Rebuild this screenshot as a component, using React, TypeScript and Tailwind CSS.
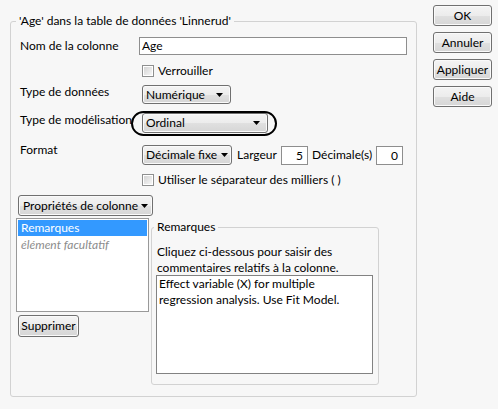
import React from "react";

function Caret() {
  return (
    <svg width="7" height="4" viewBox="0 0 7 4" className="shrink-0">
      <path d="M0 0H7L3.5 4Z" fill="#000" />
    </svg>
  );
}

function Check() {
  return (
    <div className="w-[12px] h-[12px] border border-[#8e8f8f] bg-white p-[1px] shrink-0">
      <div className="w-full h-full bg-linear-to-br from-[#d4d4d4] to-[#f6f6f6]" />
    </div>
  );
}

const btn =
  "border border-[#707070] rounded-[3px] bg-[linear-gradient(#f4f4f4_0%,#ececec_50%,#e0e0e0_51%,#d6d6d6_100%)] shadow-[inset_0_0_0_1px_#fafafa]";

export default function App() {
  return (
    <div className="w-[498px] h-[409px] bg-[#f7f7f7] flex text-[12px] leading-[16px] text-black font-['Lato',sans-serif]">
      <fieldset className="ml-[10px] mt-[13px] w-[407px] h-[384px] border border-[#d2d2d2] rounded-[3px] pl-[5px] pr-0 min-w-0">
        <legend className="px-[3px] leading-[16px]">'Age' dans la table de données 'Linnerud'</legend>
        <div className="flex flex-col">
          {/* Nom de la colonne */}
          <div className="mt-[8px] flex items-center h-[18px]">
            <div className="w-[123px] pl-[4px]">Nom de la colonne</div>
            <div className="w-[268px] h-[18px] border border-[#8e8e8e] bg-white pl-[2px] flex items-center">Age</div>
          </div>
          {/* Verrouiller */}
          <div className="mt-[10px] pl-[126px] flex items-center gap-[4px] h-[12px]">
            <Check />
            <span>Verrouiller</span>
          </div>
          {/* Type de données */}
          <div className="mt-[8px] flex h-[19px]">
            <div className="w-[126px] pl-[4px] -mt-[1px]">Type de données</div>
            <div className={`${btn} w-[89px] h-[19px] flex items-center justify-between pl-[3px] pr-[7px]`}>
              <span>Numérique</span>
              <Caret />
            </div>
          </div>
          {/* Type de modélisation */}
          <div className="mt-[9px] flex h-[20px]">
            <div className="w-[126px] pl-[4px] -mt-[1px] whitespace-nowrap">Type de modélisation</div>
            <div className="relative">
              <div className={`${btn} w-[126px] h-[20px] flex items-center justify-between pl-[3px] pr-[7px]`}>
                <span>Ordinal</span>
                <Caret />
              </div>
              <div className="absolute left-[-11px] top-[-2px] w-[146px] h-[25px] border-2 border-black rounded-[13px] pointer-events-none" />
            </div>
          </div>
          {/* Format */}
          <div className="mt-[12px] flex h-[20px] items-start">
            <div className="w-[126px] pl-[4px] -mt-[3px]">Format</div>
            <div className={`${btn} w-[90px] h-[20px] flex items-center justify-between pl-[3px] pr-[3px]`}>
              <span className="whitespace-nowrap">Décimale fixe</span>
              <Caret />
            </div>
            <div className="ml-[5px] w-[44px] h-[20px] flex items-center">Largeur</div>
            <div className="mt-[1px] w-[27px] h-[19px] border border-[#8e8e8e] bg-white flex items-center justify-end pr-[4px]">5</div>
            <div className="ml-[4px] w-[64px] h-[20px] flex items-center whitespace-nowrap">Décimale(s)</div>
            <div className="mt-[1px] w-[27px] h-[19px] border border-[#8e8e8e] bg-white flex items-center justify-end pr-[4px]">0</div>
          </div>
          {/* Séparateur */}
          <div className="mt-[9px] pl-[126px] flex items-center gap-[4px] h-[12px]">
            <Check />
            <span className="whitespace-nowrap">Utiliser le séparateur des milliers ( )</span>
          </div>
          {/* Propriétés */}
          <div className="mt-[9px] ml-[2px]">
            <div className={`${btn} w-[135px] h-[21px] flex items-center justify-between pl-[4px] pr-[4px]`}>
              <span className="whitespace-nowrap">Propriétés de colonne</span>
              <Caret />
            </div>
          </div>
          {/* Bottom */}
          <div className="mt-[2px] flex items-start">
            <div className="w-[133px] flex flex-col">
              <div className="h-[94px] border border-[#999999] bg-white p-[1px]">
                <div className="h-[16px] bg-[#3399ff] text-white pl-[3px] flex items-center">Remarques</div>
                <div className="pl-[3px] italic text-[#8c8c8c] mt-[1px]">élément facultatif</div>
              </div>
              <div className={`${btn} mt-[3px] ml-[2px] w-[61px] h-[22px] flex items-center justify-center`}>Supprimer</div>
            </div>
            <fieldset className="ml-[2px] mt-[1px] w-[228px] h-[166px] border border-[#d2d2d2] rounded-[3px] p-0 min-w-0">
              <legend className="ml-[2px] px-[3px] leading-[16px]">Remarques</legend>
              <div className="px-[4px] flex flex-col">
                <div className="mt-[9px] pl-[1px] leading-[16px] h-[31px]">
                  Cliquez ci-dessous pour saisir des
                  <br />
                  commentaires relatifs à la colonne.
                </div>
                <div className="w-[217px] h-[99px] border border-[#828282] bg-white px-[2px] leading-[16px]">
                  Effect variable (X) for multiple
                  <br />
                  regression analysis. Use Fit Model.
                </div>
              </div>
            </fieldset>
          </div>
        </div>
      </fieldset>
      <div className="ml-[16px] mt-[5px] flex flex-col gap-[6px] w-[59px]">
        <div className={`${btn} h-[21px] flex items-center justify-center`}>OK</div>
        <div className={`${btn} h-[21px] flex items-center justify-center`}>Annuler</div>
        <div className={`${btn} h-[21px] flex items-center justify-center`}>Appliquer</div>
        <div className={`${btn} h-[21px] flex items-center justify-center`}>Aide</div>
      </div>
    </div>
  );
}
